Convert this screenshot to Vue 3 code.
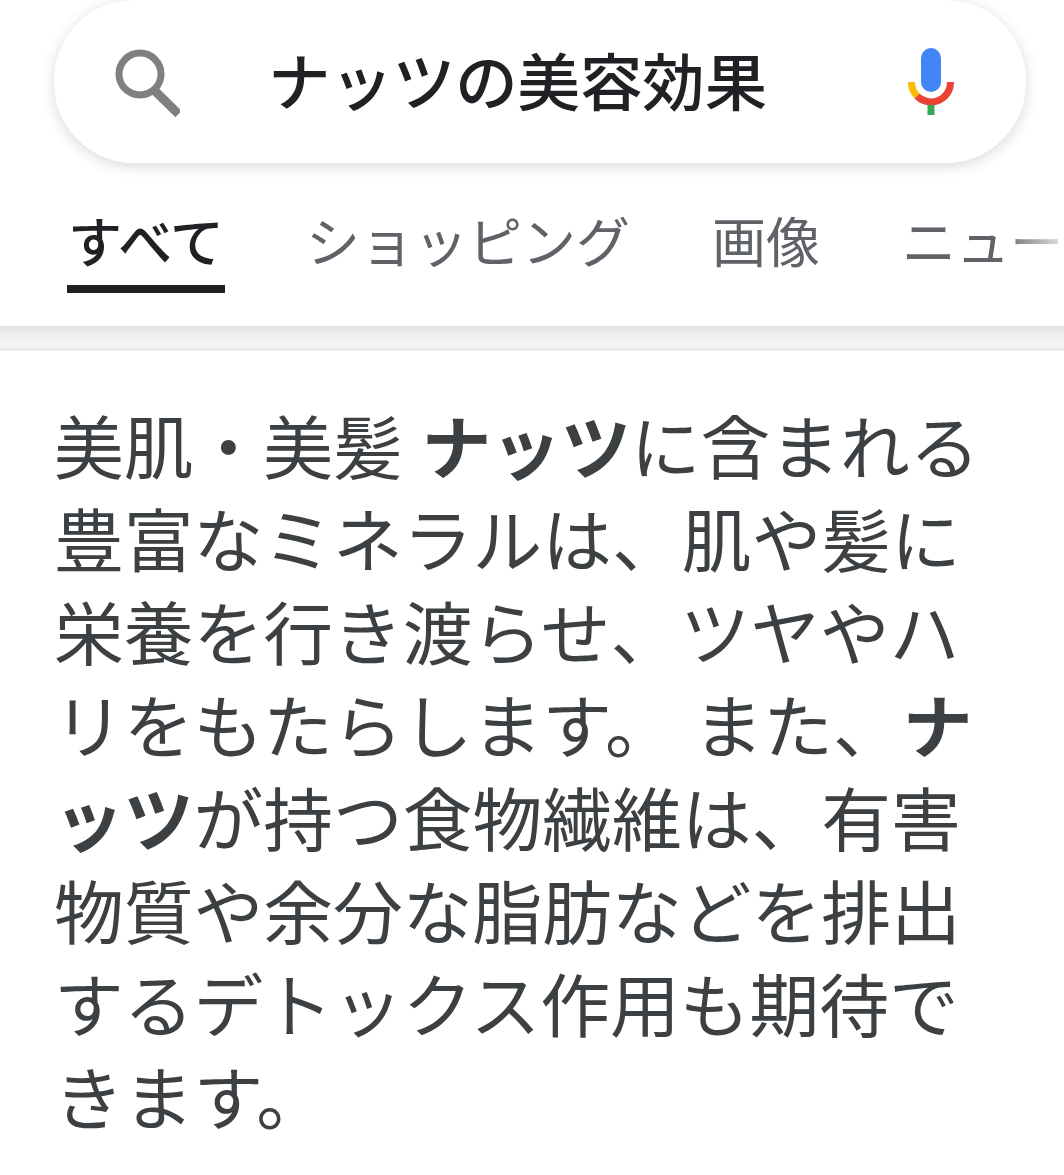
<template>
  <div class="page">
    <div class="search-wrap">
      <div class="search-bar">
        <svg class="search-icon" width="70" height="70" viewBox="0 0 70 70">
          <circle cx="30" cy="27" r="21" fill="none" stroke="#808080" stroke-width="7" />
          <path d="M45 44 L68.5 67" stroke="#808080" stroke-width="9" fill="none" />
        </svg>
        <div class="query">ナッツの美容効果</div>
        <svg class="mic-icon" width="50" height="70" viewBox="0 0 50 70">
          <rect x="15" y="2" width="20" height="44" rx="10" fill="#4285f4" />
          <path d="M5.5 36 A19.5 19.5 0 0 0 11 50" fill="none" stroke="#fbbc05" stroke-width="7" />
          <path d="M11 50 A19.5 19.5 0 0 0 44.5 36" fill="none" stroke="#ea4335" stroke-width="7" />
          <rect x="21.5" y="59" width="7" height="10" fill="#34a853" />
        </svg>
      </div>
    </div>
    <div class="tabs">
      <div v-for="tab in tabs" :key="tab" class="tab" :class="{ active: tab === 'すべて' }">{{ tab }}</div>
      <div class="fade"></div>
    </div>
    <div class="divider"></div>
    <div class="snippet">
      美肌・美髪 <b>ナッツ</b>に含まれる<br>
      豊富なミネラルは、肌や髪に<br>
      栄養を行き渡らせ、ツヤやハ<br>
      リをもたらします。 また、<b>ナ</b><br>
      <b>ッツ</b>が持つ食物繊維は、有害<br>
      物質や余分な脂肪などを排出<br>
      するデトックス作用も期待で<br>
      きます。
    </div>
  </div>
</template>

<script setup>
const tabs = ['すべて', 'ショッピング', '画像', 'ニュー']
</script>

<style>
html, body {
  background: #fff;
  overflow: hidden;
}
</style>

<style scoped>
.page {
  width: 1064px;
  height: 1175px;
  overflow: hidden;
  background: #fff;
  font-family: "Noto Sans CJK JP", "Noto Sans", sans-serif;
}

.search-wrap {
  padding: 0 38px 0 54px;
}

.search-bar {
  height: 163px;
  border-radius: 80px;
  background: #fff;
  box-shadow: 0 3px 14px rgba(60, 70, 70, 0.2);
  display: flex;
  align-items: center;
}

.search-icon {
  margin-left: 56px;
  margin-top: 1px;
  flex: none;
}

.query {
  margin-left: 88px;
  flex: 1;
  font-size: 62.4px;
  font-weight: 500;
  line-height: 158px;
  height: 163px;
  color: #202124;
  white-space: nowrap;
}

.mic-icon {
  margin-right: 70px;
  margin-top: -1px;
  flex: none;
}

.tabs {
  position: relative;
  height: 163px;
  padding-left: 67px;
  display: flex;
  gap: 80px;
  overflow: hidden;
}

.tab {
  font-size: 54px;
  line-height: 153px;
  height: 122px;
  padding: 0 1px;
  color: #5f6368;
  white-space: nowrap;
  flex: none;
}

.tab.active {
  color: #202124;
  font-weight: 500;
  border-bottom: 8px solid #202124;
}

.fade {
  position: absolute;
  top: 0;
  right: 0;
  width: 64px;
  height: 100%;
  background: linear-gradient(to right, rgba(255, 255, 255, 0) 0, rgba(255, 255, 255, 0.75) 90%, #fff 91%);
}

.divider {
  height: 22px;
  background: linear-gradient(to bottom, #e1e2e4, #f1f3f4 60%);
  border-bottom: 3px solid #e8e9eb;
}

.snippet {
  padding: 46px 0 0 54px;
  font-size: 69.75px;
  line-height: 93px;
  word-spacing: 3px;
  color: #3c4043;
  white-space: nowrap;
}

.snippet b {
  font-weight: 700;
}
</style>
